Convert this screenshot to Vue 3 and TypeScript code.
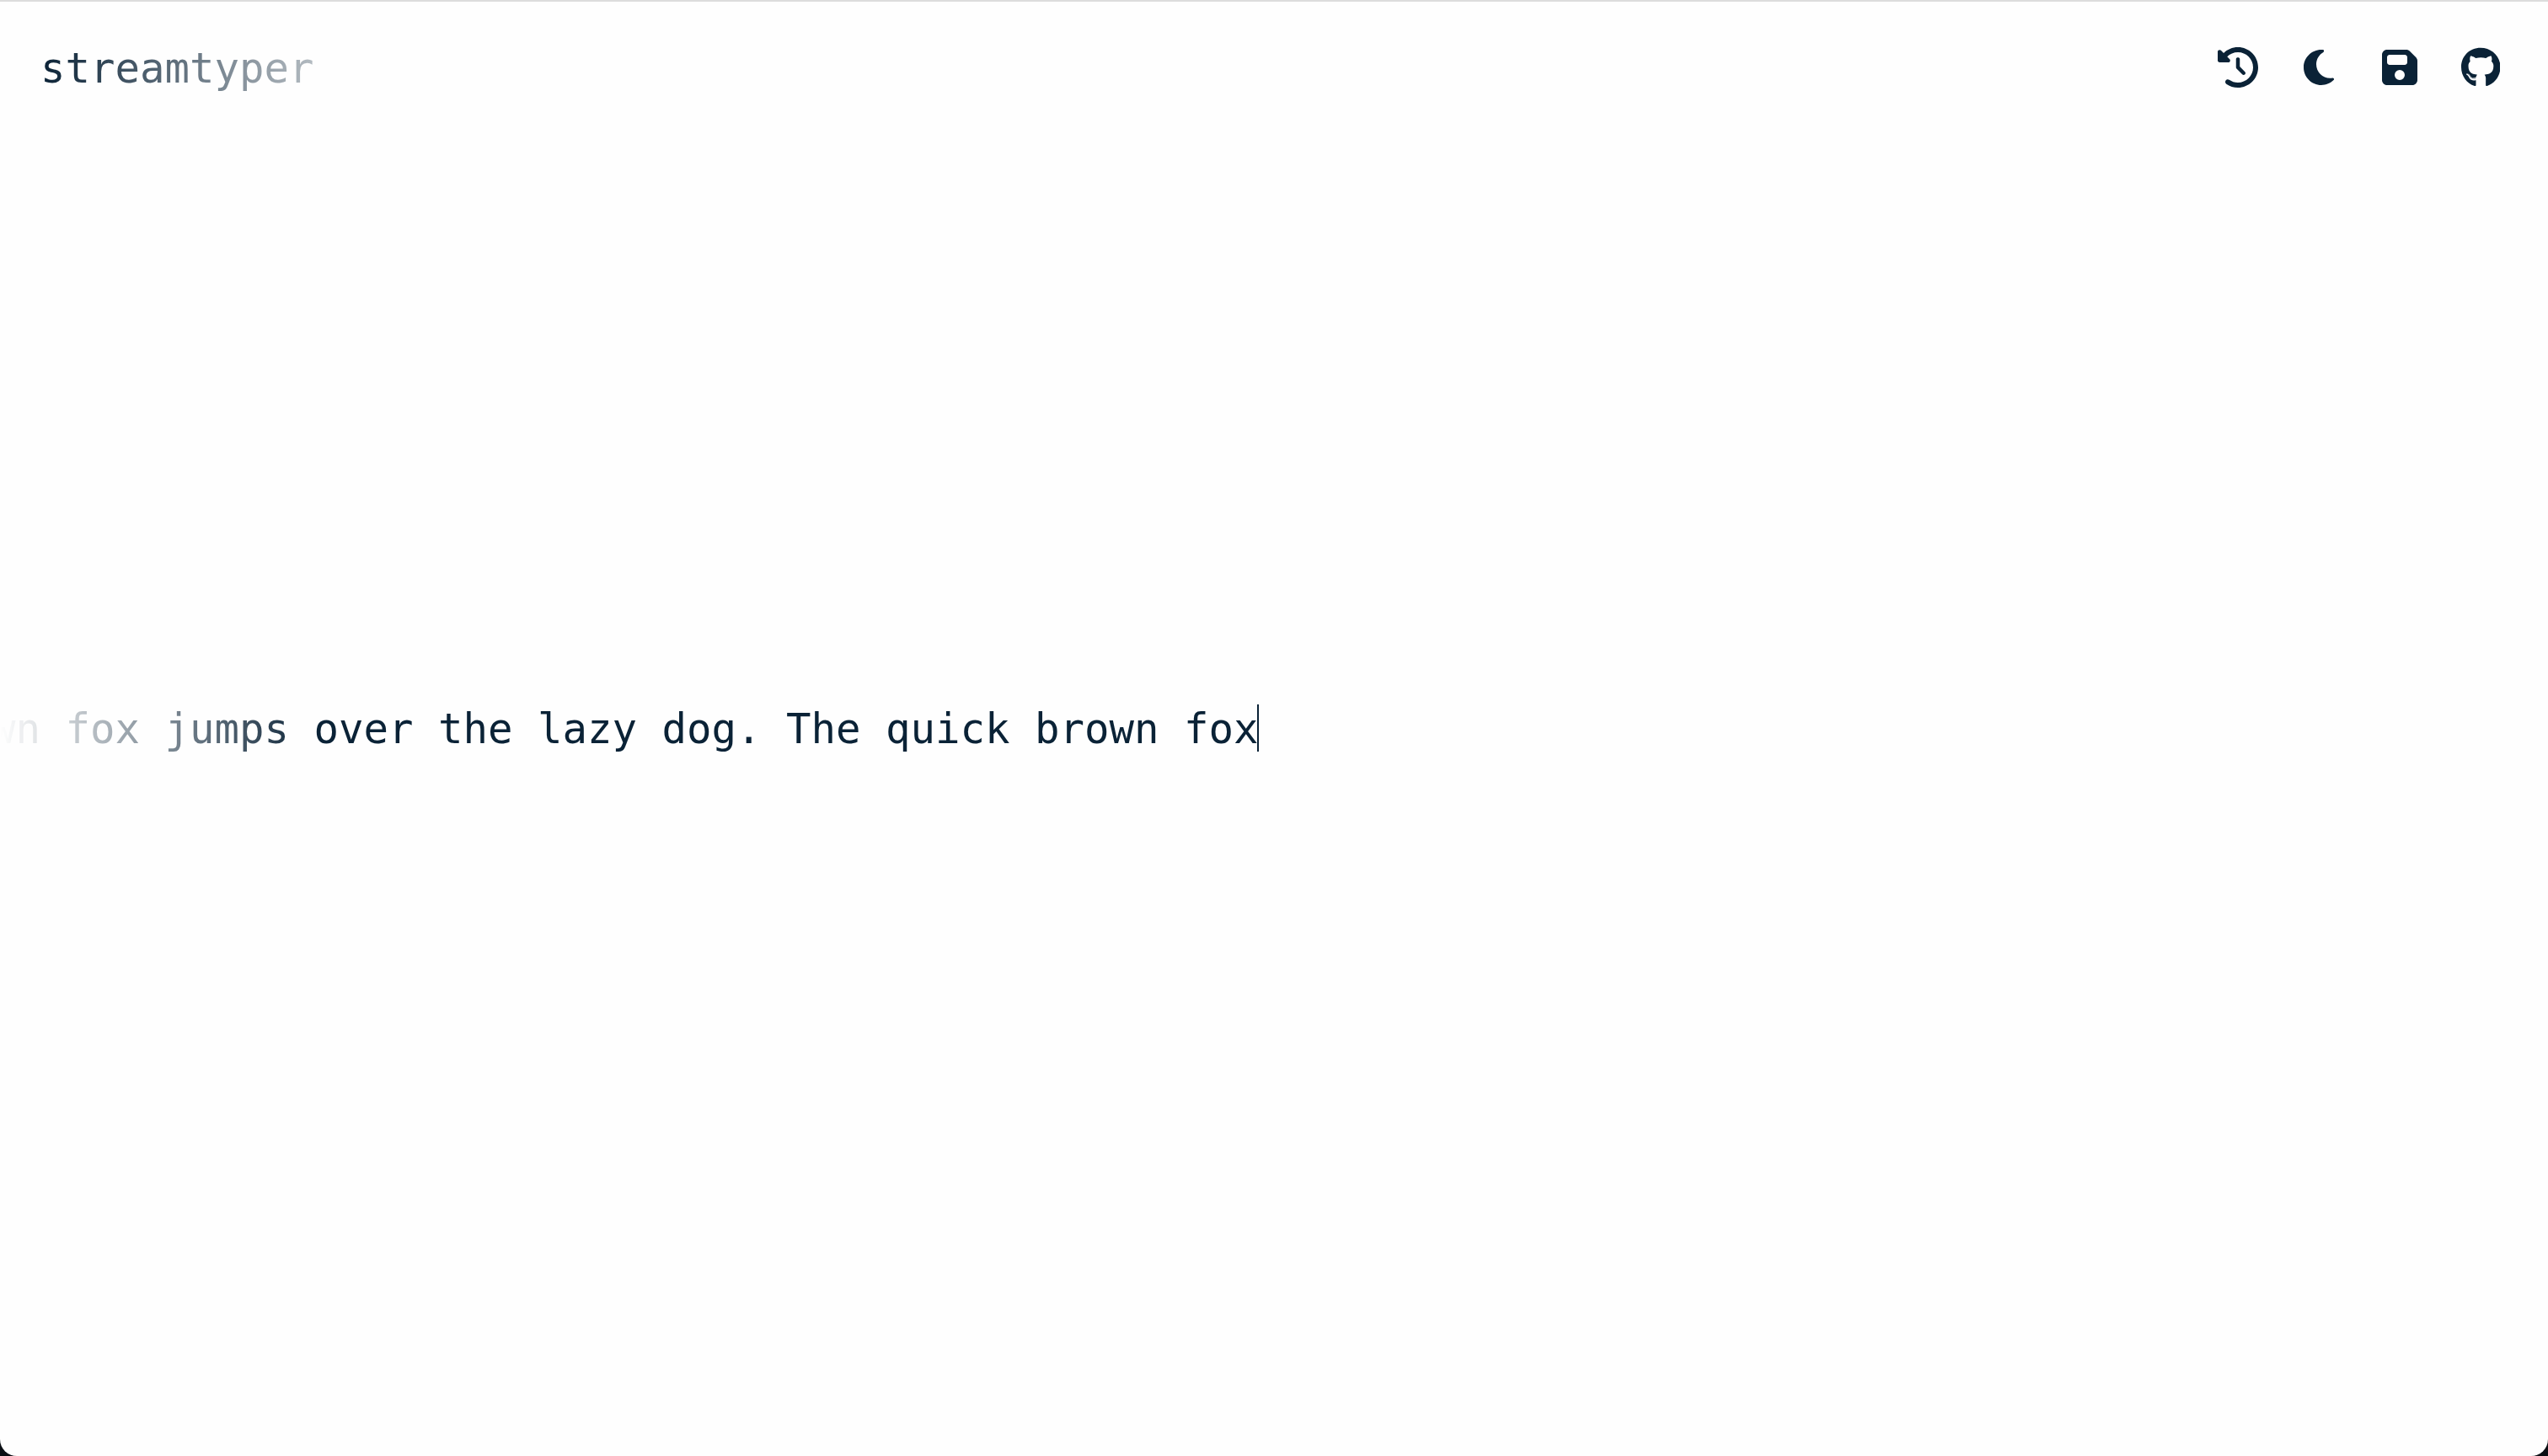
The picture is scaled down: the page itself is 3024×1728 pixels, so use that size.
<script setup lang="ts">
import { onMounted, ref } from 'vue'

interface Action {
  label: string
  viewBox: string
  path: string
  href?: string
}

const actions: Action[] = [
  {
    label: 'History',
    viewBox: '0 0 512 512',
    path: 'M75 75L41 41C25.9 25.9 0 36.6 0 57.9V168c0 13.3 10.7 24 24 24H134.1c21.4 0 32.1-25.9 17-41l-30.8-30.8C155 85.5 203 64 256 64c106 0 192 86 192 192s-86 192-192 192c-40.8 0-78.6-12.7-109.7-34.4c-14.5-10.1-34.4-6.6-44.6 7.9s-6.6 34.4 7.9 44.6C151.2 495 201.7 512 256 512c141.4 0 256-114.6 256-256S397.4 0 256 0C185.3 0 121.3 28.7 75 75zm181 53c-13.3 0-24 10.7-24 24V256c0 6.4 2.5 12.5 7 17l72 72c9.4 9.4 24.6 9.4 33.9 0s9.4-24.6 0-33.9l-65-65V152c0-13.3-10.7-24-24-24z',
  },
  {
    label: 'Dark mode',
    viewBox: '0 0 384 512',
    path: 'M223.5 32C100 32 0 132.3 0 256S100 480 223.5 480c60.6 0 115.5-24.2 155.8-63.4c5-4.9 6.3-12.5 3.1-18.7s-10.1-9.7-17-8.5c-9.8 1.7-19.8 2.6-30.1 2.6c-96.9 0-175.5-78.8-175.5-176c0-65.8 36-123.1 89.3-153.3c6.1-3.5 9.2-10.5 7.7-17.3s-7.3-11.9-14.3-12.5c-6.3-.5-12.6-.8-19-.8z',
  },
  {
    label: 'Save',
    viewBox: '0 0 448 512',
    path: 'M64 32C28.7 32 0 60.7 0 96V416c0 35.3 28.7 64 64 64H384c35.3 0 64-28.7 64-64V173.3c0-17-6.7-33.3-18.7-45.3L352 50.7C340 38.7 323.7 32 306.7 32H64zm0 96c0-17.7 14.3-32 32-32H288c17.7 0 32 14.3 32 32v64c0 17.7-14.3 32-32 32H96c-17.7 0-32-14.3-32-32V128zM224 288a64 64 0 1 1 0 128 64 64 0 1 1 0-128z',
  },
  {
    label: 'GitHub',
    href: '#github',
    viewBox: '0 0 496 512',
    path: 'M165.9 397.4c0 2-2.3 3.6-5.2 3.6-3.3.3-5.6-1.3-5.6-3.6 0-2 2.3-3.6 5.2-3.6 3-.3 5.6 1.3 5.6 3.6zm-31.1-4.5c-.7 2 1.3 4.3 4.3 4.9 2.6 1 5.6 0 6.2-2s-1.3-4.3-4.3-5.2c-2.6-.7-5.5.3-6.2 2.3zm44.2-1.7c-2.9.7-4.9 2.6-4.6 4.9.3 2 2.9 3.3 5.9 2.6 2.9-.7 4.9-2.6 4.6-4.6-.3-1.9-3-3.2-5.9-2.9zM244.8 8C106.1 8 0 113.3 0 252c0 110.9 69.8 205.8 169.5 239.2 12.8 2.3 17.3-5.6 17.3-12.1 0-6.2-.3-40.4-.3-61.4 0 0-70 15-84.7-29.8 0 0-11.4-29.1-27.8-36.6 0 0-22.9-15.7 1.6-15.4 0 0 24.9 2 38.6 25.8 21.9 38.6 58.6 27.5 72.9 20.9 2.3-16 8.8-27.1 16-33.7-55.9-6.2-112.3-14.3-112.3-110.5 0-27.5 7.6-41.3 23.6-58.9-2.6-6.5-11.1-33.3 2.6-67.9 20.9-6.5 69 27 69 27 20-5.6 41.5-8.5 62.8-8.5s42.8 2.9 62.8 8.5c0 0 48.1-33.6 69-27 13.7 34.7 5.2 61.4 2.6 67.9 16 17.7 25.8 31.5 25.8 58.9 0 96.5-58.9 104.2-114.8 110.5 9.2 7.9 17 22.9 17 46.4 0 33.7-.3 75.4-.3 83.6 0 6.5 4.6 14.4 17.3 12.1C428.2 457.8 496 362.9 496 252 496 113.3 383.5 8 244.8 8zM97.2 352.9c-1.3 1-1 3.3.7 5.2 1.6 1.6 3.9 2.3 5.2 1 1.3-1 1-3.3-.7-5.2-1.6-1.6-3.9-2.3-5.2-1zm-10.8-8.1c-.7 1.3.3 2.9 2.3 3.9 1.6 1 3.6.7 4.3-.7.7-1.3-.3-2.9-2.3-3.9-2-.6-3.6-.3-4.3.7zm32.4 35.6c-1.6 1.3-1 4.3 1.3 6.2 2.3 2.3 5.2 2.6 6.5 1 1.3-1.3.7-4.3-1.3-6.2-2.2-2.3-5.2-2.6-6.5-1zm-11.4-14.7c-1.6 1-1.6 3.6 0 5.9 1.6 2.3 4.3 3.3 5.6 2.3 1.6-1.3 1.6-3.9 0-6.2-1.4-2.3-4-3.3-5.6-2z',
  },
]

const stream = ref('wn fox jumps over the lazy dog. The quick brown fox')
const field = ref<HTMLInputElement | null>(null)

// Keep the newest characters next to the caret.
function followCaret() {
  if (field.value) field.value.scrollLeft = field.value.scrollWidth
}

onMounted(followCaret)
</script>

<template>
  <div class="page">
    <header class="bar">
      <h1 class="logo">streamtyper</h1>
      <nav class="actions" aria-label="Tools">
        <component
          :is="action.href ? 'a' : 'button'"
          v-for="action in actions"
          :key="action.label"
          class="action"
          :href="action.href"
          :type="action.href ? undefined : 'button'"
          :aria-label="action.label"
        >
          <svg class="icon" :viewBox="action.viewBox" aria-hidden="true">
            <path :d="action.path" />
          </svg>
        </component>
      </nav>
    </header>
    <main class="line">
      <input
        ref="field"
        v-model="stream"
        class="field"
        type="text"
        aria-label="Text stream"
        spellcheck="false"
        autocomplete="off"
        @input="followCaret"
      />
      <span class="caret" aria-hidden="true"></span>
    </main>
  </div>
</template>

<style>
body {
  margin: 0;
  background: #0b0f14;
}
</style>

<style scoped>
.page {
  box-sizing: border-box;
  min-height: 100vh;
  display: grid;
  grid-template-rows: 1fr auto 1fr;
  background: #fefefe;
  border-radius: 0 0 20px 20px;
  box-shadow: inset 0 2px 0 #dcdcdc;
  color: #0a2236;
  font-family: "DejaVu Sans Mono", monospace;
  font-size: 49px;
  line-height: 56px;
}

.bar {
  display: flex;
  align-items: center;
  justify-content: space-between;
  align-self: start;
  padding: 50px 56px 0 48px;
}

.logo {
  margin: 0;
  padding-top: 4px;
  font: inherit;
  mask-image: linear-gradient(90deg, #000, rgba(0, 0, 0, 0.3));
}

.actions {
  display: flex;
  gap: 48px;
}

.action {
  display: flex;
  align-items: center;
  justify-content: center;
  width: 48px;
  height: 48px;
  padding: 0;
  border: 0;
  background: none;
  color: inherit;
  cursor: pointer;
}

.icon {
  height: 48px;
  fill: currentColor;
}

.line {
  display: flex;
  align-items: center;
  width: 50%;
  box-sizing: border-box;
  padding-right: 18px;
}

.field {
  flex: 1;
  min-width: 0;
  padding: 4px 0 0;
  border: 0;
  outline: 0;
  background: none;
  color: inherit;
  font: inherit;
  text-align: right;
  caret-color: transparent;
  mask-image: linear-gradient(90deg, transparent, #000 25%);
}

.caret {
  width: 2px;
  height: 56px;
  margin-left: -2px;
  background: currentColor;
}
</style>
